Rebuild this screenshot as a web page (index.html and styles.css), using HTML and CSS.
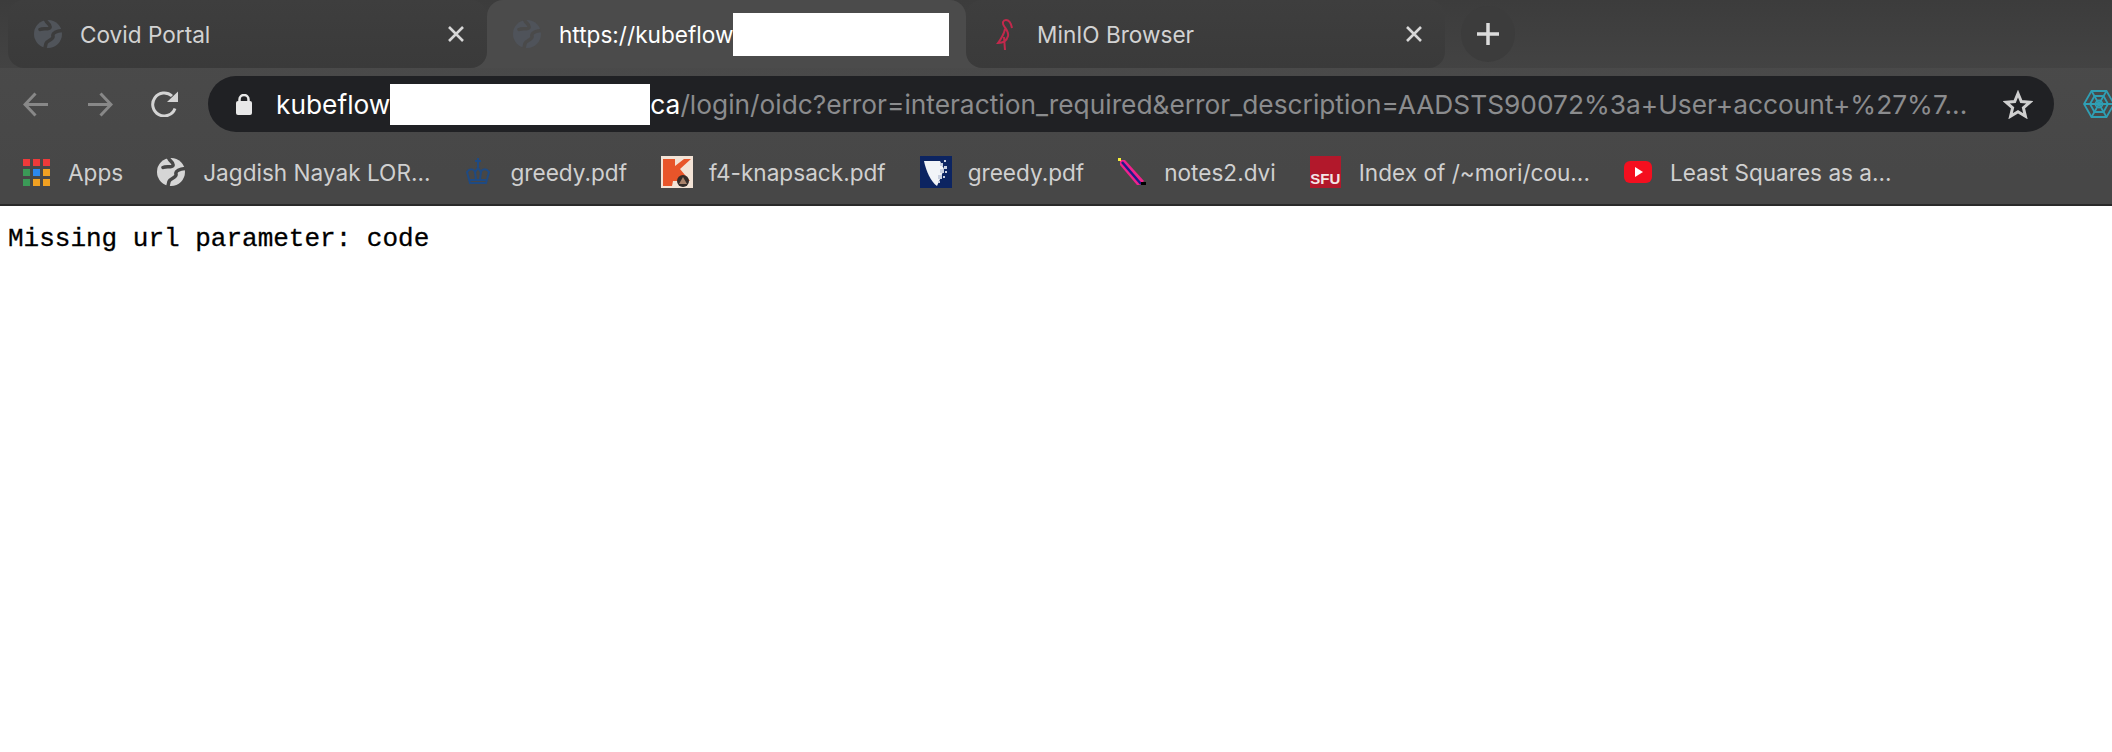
FILE: index.html
```html
<!DOCTYPE html>
<html lang="en">
<head>
<meta charset="utf-8">
<title>Missing url parameter</title>
<link rel="stylesheet" href="styles.css">
</head>
<body>
<header class="chrome">
  <div class="tabstrip">
    <div class="tab inactive">
      <svg class="fav" viewBox="0 0 28 28"><circle cx="14" cy="14" r="14" fill="#50545a"/><path d="M11.500 0C13 4 17 4 16 7.500 15 10 9 8 6 9.500M28 10.500C23 11 18 13 19 16 20 20 13 20 12 23.500L11 28" fill="none" stroke="#3c3c3c" stroke-width="3.500" stroke-linecap="round"/></svg>
      <span class="tab-title">Covid Portal</span>
      <svg class="close" viewBox="0 0 16 16"><path d="M1 1l14 14M15 1L1 15"/></svg>
    </div>
    <div class="tab active">
      <svg class="fav" viewBox="0 0 28 28"><circle cx="14" cy="14" r="14" fill="#4f535a"/><path d="M11.500 0C13 4 17 4 16 7.500 15 10 9 8 6 9.500M28 10.500C23 11 18 13 19 16 20 20 13 20 12 23.500L11 28" fill="none" stroke="#4a4a4a" stroke-width="3.500" stroke-linecap="round"/></svg>
      <span class="tab-title light">https://kubeflow</span><span class="redact tab-redact"></span>
    </div>
    <div class="tab inactive">
      <svg class="fav bird" viewBox="0 0 17 31"><path d="M16 9C15 4 13 1 10 1 7 1 6 4 8 7c2 3 5 6 4 10-1 4-4 7-10 7 3-4 6-9 7-14M8 18l1 13" fill="none" stroke="#c2294c" stroke-width="2"/></svg>
      <span class="tab-title">MinIO Browser</span>
      <svg class="close" viewBox="0 0 16 16"><path d="M1 1l14 14M15 1L1 15"/></svg>
    </div>
    <div class="newtab"><svg viewBox="0 0 24 24"><path d="M12 1v22M1 12h22"/></svg></div>
  </div>
  <div class="toolbar">
    <svg class="nav dim" viewBox="0 0 26 25"><path d="M25 12.500H2M12.500 1.500L2 12.500l10.500 11"/></svg>
    <svg class="nav dim" viewBox="0 0 26 25"><path d="M1 12.500h23M13.500 1.500L24 12.500l-10.500 11"/></svg>
    <svg class="nav reload" viewBox="0 0 28 26"><path d="M24 17.500A11.500 11.500 0 1 1 21 5"/><path class="solid" d="M16 11L27 .5V11z"/></svg>
    <div class="omnibox">
      <svg class="lock" viewBox="0 0 16 21"><path class="lockbody" d="M2 7h12a2 2 0 0 1 2 2v10a2 2 0 0 1-2 2H2a2 2 0 0 1-2-2V9a2 2 0 0 1 2-2z"/><path class="shackle" d="M3.500 8V5.500a4.500 4.500 0 0 1 9 0V8"/></svg>
      <span class="host">kubeflow</span><span class="redact url-redact"></span><span class="host">ca</span><span class="path">/login/oidc?error=interaction_required&amp;error_description=AADSTS90072%3a+User+account+%27%7...</span>
      <svg class="star" viewBox="0 0 30 29"><path d="M15 3.500l3.300 8 8.700.7-6.600 5.600 2 8.400L15 21.700l-7.400 4.500 2-8.400L3 12.200l8.700-.7z"/></svg>
    </div>
    <svg class="web" viewBox="0 0 32 28"><g fill="none" stroke="#2f9fb4" stroke-width="1.800"><path d="M8.500 1h15L31 14l-7.500 13h-15L1 14z"/><path d="M11.500 6h9L25 14l-4.500 8h-9L7 14z"/><circle cx="16" cy="14" r="3.500"/><path d="M8.500 1l15 26M23.500 1l-15 26M1 14h30"/></g></svg>
  </div>
  <nav class="bookmarks">
    <div class="bm">
      <div class="apps"><i class="r"></i><i class="r"></i><i class="r"></i><i class="g"></i><i class="b"></i><i class="y"></i><i class="g"></i><i class="y"></i><i class="y"></i></div>
      <span>Apps</span>
    </div>
    <div class="bm">
      <svg class="bmi" viewBox="0 0 28 28"><circle cx="14" cy="14" r="14" fill="#d6d6d6"/><path d="M11.500 0C13 4 17 4 16 7.500 15 10 9 8 6 9.500M28 10.500C23 11 18 13 19 16 20 20 13 20 12 23.500L11 28" fill="none" stroke="#474747" stroke-width="3.500" stroke-linecap="round"/></svg>
      <span>Jagdish Nayak LOR...</span>
    </div>
    <div class="bm">
      <svg class="bmi" viewBox="0 0 28 28"><g fill="none" stroke="#1f4a82" stroke-width="2"><path d="M14 0v9M11 3h6M6 25l-3-11c3-4 7-3 8 0l3-4 3 4c1-3 5-4 8 0l-3 11z"/><path d="M5 22h18M11 13l1 9M17 13l-1 9"/></g></svg>
      <span>greedy.pdf</span>
    </div>
    <div class="bm">
      <svg class="bmi wide" viewBox="0 0 32 32"><rect width="32" height="32" fill="#f3e3d6"/><path d="M2 3h12v7l9-7h7L19 13l10 12H12l-1 5H2z" fill="#e8552a"/><circle cx="22" cy="25" r="6" fill="#332b28"/><path d="M22 21l4 7h-8z" fill="#a9826b"/></svg>
      <span>f4-knapsack.pdf</span>
    </div>
    <div class="bm">
      <svg class="bmi wide" viewBox="0 0 32 32"><rect width="32" height="32" fill="#0c2461"/><path d="M4 5h16l4 8-3 8-4 9C11 26 6 15 4 5z" fill="#f2f4f8"/><path d="M20 7h3v3h-3zM24 4h2v2h-2zM24 10h3v3h-3zM20 13h4v4h-4zM25 15h2v2h-2zM18 19h4v4h-4zM23 20h2v2h-2zM18 25h2v2h-2z" fill="#c9d0e0"/></svg>
      <span>greedy.pdf</span>
    </div>
    <div class="bm">
      <svg class="bmi" viewBox="0 0 28 28"><path d="M2 2l5 0 19 21-4 4-3 0L2 7z" fill="#f0228c"/><path d="M4 4l19 22" stroke="#1d1a8a" stroke-width="2.500"/><path d="M0 0h3v3H0z" fill="#f5ee3a"/><path d="M23 24h5v3h-5z" fill="#000"/></svg>
      <span>notes2.dvi</span>
    </div>
    <div class="bm">
      <div class="sfu"><span>SFU</span></div>
      <span>Index of /~mori/cou...</span>
    </div>
    <div class="bm">
      <svg class="bmi" viewBox="0 0 28 28"><rect y="3" width="28" height="22" rx="6" fill="#f40f1f"/><path d="M11 9l8 5-8 5z" fill="#fff"/></svg>
      <span>Least Squares as a...</span>
    </div>
  </nav>
</header>
<main class="page">Missing url parameter: code</main>
</body>
</html>
```
FILE: styles.css
```css
* { box-sizing: border-box; }
html, body { margin: 0; height: 100%; background: #fff; overflow: hidden; }
body { font-family: Inter, "Liberation Sans", sans-serif; }

.chrome { background: linear-gradient(#4b4b4b, #474747 85%); border-bottom: 2px solid #292929; height: 206px; }

.tabstrip { display: flex; align-items: stretch; height: 68px; padding-left: 8px; background: linear-gradient(#3c3c3c, #434343); }
.tab { position: relative; display: flex; align-items: center; width: 479px; padding: 0 23px 0 26px; font-size: 22.600px; }
.tab.inactive { background: linear-gradient(#3e3e3e, #3a3a3a); border-radius: 16px; z-index: 1; color: #d2d2d2; }
.tab.active { background: #4b4b4b; border-radius: 16px 16px 0 0; }
.tab.active::before, .tab.active::after { content: ""; position: absolute; bottom: 0; width: 16px; height: 16px; background: #4b4b4b; }
.tab.active::before { left: -16px; }
.tab.active::after { right: -16px; }
.fav { width: 28px; height: 28px; flex: none; }
.fav.bird { width: 17px; height: 31px; margin-left: 4px; margin-right: 6px; }
.tab-title { margin-left: 18px; white-space: nowrap; }
.tab-title.light { color: #fff; }
.close { width: 16px; height: 16px; margin-left: auto; stroke: #d8d8d8; stroke-width: 2.600; fill: none; }
.redact { display: inline-block; background: #fff; flex: none; }
.tab-redact { width: 216px; height: 43px; }

.newtab { display: flex; align-items: center; justify-content: center; width: 54px; height: 56px; margin: 6px 0 0 16px; border-radius: 50%; background: #3c3c3c; }
.newtab svg { width: 24px; height: 24px; stroke: #dcdcdc; stroke-width: 3.500; fill: none; }

.toolbar { display: flex; align-items: center; height: 72px; padding: 0 0 0 23px; overflow: hidden; }
.nav { flex: none; fill: none; stroke-width: 3; }
.nav.dim { width: 26px; height: 25px; margin-right: 38px; stroke: #888; }
.nav.reload { width: 28px; height: 26px; margin-right: 29px; stroke: #d4d4d4; }
.nav .solid { fill: #d4d4d4; stroke: none; }
.omnibox { display: flex; align-items: center; width: 1846px; height: 56px; flex: none; padding-left: 28px; background: #202124; border-radius: 28px; font-size: 26.300px; white-space: nowrap; }
.lock { width: 16px; height: 21px; flex: none; margin-right: 24px; }
.lockbody { fill: #e8e8e8; }
.shackle { fill: none; stroke: #e8e8e8; stroke-width: 2.500; }
.host { color: #fff; }
.path { color: #8b8c8e; }
.url-redact { width: 260px; height: 41px; }
.star { width: 30px; height: 29px; flex: none; margin-left: auto; margin-right: 21px; fill: none; stroke: #cfcfcf; stroke-width: 3; }
.web { width: 32px; height: 28px; flex: none; margin-left: 29px; }

.bookmarks { display: flex; align-items: center; gap: 34px; height: 64px; padding: 0 0 0 23px; color: #d0d0d0; font-size: 22.600px; white-space: nowrap; }
.bm { display: flex; align-items: center; gap: 18px; }
.bmi { width: 28px; height: 28px; flex: none; }
.bmi.wide { width: 32px; height: 32px; margin-right: -2px; }
.apps { display: grid; grid-template-columns: repeat(3, 7px); grid-auto-rows: 7px; gap: 3px; flex: none; }
.apps i { display: block; }
.apps .r { background: #ee3a3a; }
.apps .g { background: #3b9a57; }
.apps .b { background: #2c88ee; }
.apps .y { background: #f0a022; }
.sfu { display: flex; align-items: flex-end; justify-content: center; width: 31px; height: 32px; flex: none; background: #b2182b; color: #f2e6e6; font-family: "Liberation Sans", sans-serif; font-size: 15px; font-weight: 700; line-height: 18px; }

.page { padding: 18px 8px; font-family: "Liberation Mono", monospace; font-size: 26px; line-height: 30px; color: #000; -webkit-text-stroke: 0.3px #000; }
```
